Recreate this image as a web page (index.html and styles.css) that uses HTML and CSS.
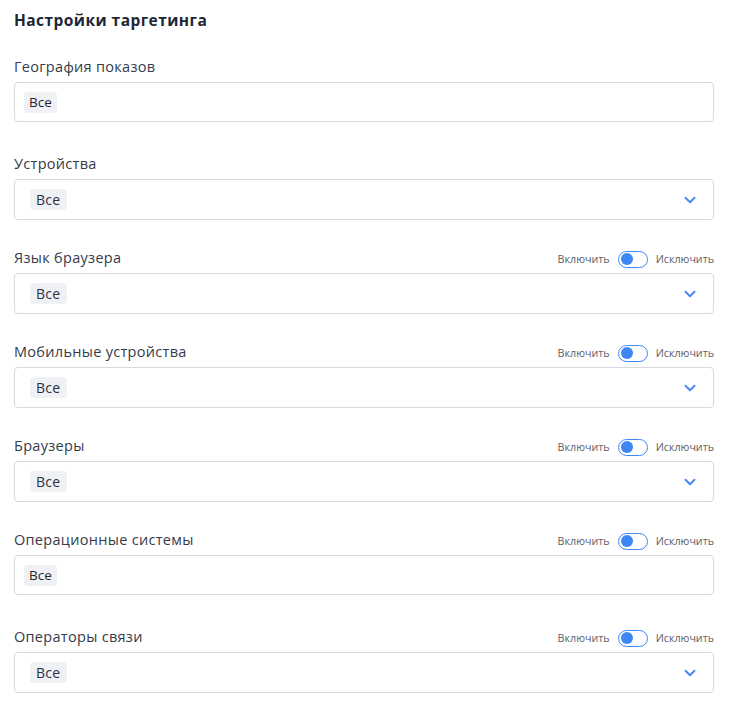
FILE: index.html
```html
<!DOCTYPE html>
<html lang="ru">
<head>
<meta charset="utf-8">
<link rel="stylesheet" href="styles.css">
</head>
<body>
<div class="page">
  <h2 class="title">Настройки таргетинга</h2>

  <div class="field field-plain">
    <div class="label-row"><span class="label">География показов</span></div>
    <div class="box box-plain"><span class="chip chip-plain">Все</span></div>
  </div>

  <div class="field">
    <div class="label-row"><span class="label">Устройства</span></div>
    <div class="box box-select"><span class="chip">Все</span>
      <svg class="chev" width="12" height="8" viewBox="0 0 12 8"><path d="M1.5 1.8 6 6.2 10.5 1.8" fill="none" stroke="#4a8af4" stroke-width="2" stroke-linecap="round" stroke-linejoin="round"/></svg>
    </div>
  </div>

  <div class="field">
    <div class="label-row"><span class="label">Язык браузера</span>
      <div class="switch"><span>Включить</span><span class="toggle"><span class="knob"></span></span><span>Исключить</span></div>
    </div>
    <div class="box box-select"><span class="chip">Все</span>
      <svg class="chev" width="12" height="8" viewBox="0 0 12 8"><path d="M1.5 1.8 6 6.2 10.5 1.8" fill="none" stroke="#4a8af4" stroke-width="2" stroke-linecap="round" stroke-linejoin="round"/></svg>
    </div>
  </div>

  <div class="field">
    <div class="label-row"><span class="label">Мобильные устройства</span>
      <div class="switch"><span>Включить</span><span class="toggle"><span class="knob"></span></span><span>Исключить</span></div>
    </div>
    <div class="box box-select"><span class="chip">Все</span>
      <svg class="chev" width="12" height="8" viewBox="0 0 12 8"><path d="M1.5 1.8 6 6.2 10.5 1.8" fill="none" stroke="#4a8af4" stroke-width="2" stroke-linecap="round" stroke-linejoin="round"/></svg>
    </div>
  </div>

  <div class="field">
    <div class="label-row"><span class="label">Браузеры</span>
      <div class="switch"><span>Включить</span><span class="toggle"><span class="knob"></span></span><span>Исключить</span></div>
    </div>
    <div class="box box-select"><span class="chip">Все</span>
      <svg class="chev" width="12" height="8" viewBox="0 0 12 8"><path d="M1.5 1.8 6 6.2 10.5 1.8" fill="none" stroke="#4a8af4" stroke-width="2" stroke-linecap="round" stroke-linejoin="round"/></svg>
    </div>
  </div>

  <div class="field field-plain">
    <div class="label-row"><span class="label">Операционные системы</span>
      <div class="switch"><span>Включить</span><span class="toggle"><span class="knob"></span></span><span>Исключить</span></div>
    </div>
    <div class="box box-plain"><span class="chip chip-plain">Все</span></div>
  </div>

  <div class="field">
    <div class="label-row"><span class="label">Операторы связи</span>
      <div class="switch"><span>Включить</span><span class="toggle"><span class="knob"></span></span><span>Исключить</span></div>
    </div>
    <div class="box box-select"><span class="chip">Все</span>
      <svg class="chev" width="12" height="8" viewBox="0 0 12 8"><path d="M1.5 1.8 6 6.2 10.5 1.8" fill="none" stroke="#4a8af4" stroke-width="2" stroke-linecap="round" stroke-linejoin="round"/></svg>
    </div>
  </div>
</div>
</body>
</html>
```

FILE: styles.css
```css
* { box-sizing: border-box; }
body {
  margin: 0;
  background: #fff;
  font-family: "Open Sans", "Noto Sans", sans-serif;
  color: #2f3441;
}
.page {
  padding: 10px 17px 0 14px;
}
.title {
  margin: 0 0 27px;
  font-size: 15.5px;
  line-height: 20px;
  font-weight: 700;
  color: #1d2636;
  letter-spacing: 0.45px;
}
.field {
  margin-bottom: 28px;
}
.field-plain {
  margin-bottom: 32px;
}
.label-row {
  display: flex;
  align-items: center;
  justify-content: space-between;
  height: 20px;
  margin-bottom: 5px;
}
.label {
  font-size: 14.5px;
  line-height: 20px;
  color: #353b4a;
  letter-spacing: 0.3px;
}
.switch {
  display: flex;
  align-items: center;
  gap: 8px;
  font-size: 10.7px;
  color: #5b606b;
  margin-top: 2px;
}
.toggle {
  width: 30px;
  height: 17px;
  border: 1.5px solid #3f86f5;
  border-radius: 9px;
  display: flex;
  align-items: center;
  padding-left: 2px;
}
.knob {
  width: 12px;
  height: 12px;
  border-radius: 50%;
  background: #3f86f5;
}
.box {
  border: 1px solid #d6d9de;
  border-radius: 4px;
  height: 40px;
  display: flex;
  align-items: center;
}
.box-plain {
  padding-left: 9px;
  height: 40px;
}
.box-select {
  padding: 0 17px 0 15px;
  height: 41px;
  justify-content: space-between;
}
.chip {
  background: #eff1f5;
  border-radius: 4px;
  padding: 0 6px;
  height: 21px;
  line-height: 21px;
  font-size: 14px;
  letter-spacing: 0.3px;
  color: #2b3140;
}
.chip-plain {
  font-size: 13.5px;
  letter-spacing: 0;
  padding: 0 5px;
  color: #1f2533;
}
.chev {
  display: block;
}
```
